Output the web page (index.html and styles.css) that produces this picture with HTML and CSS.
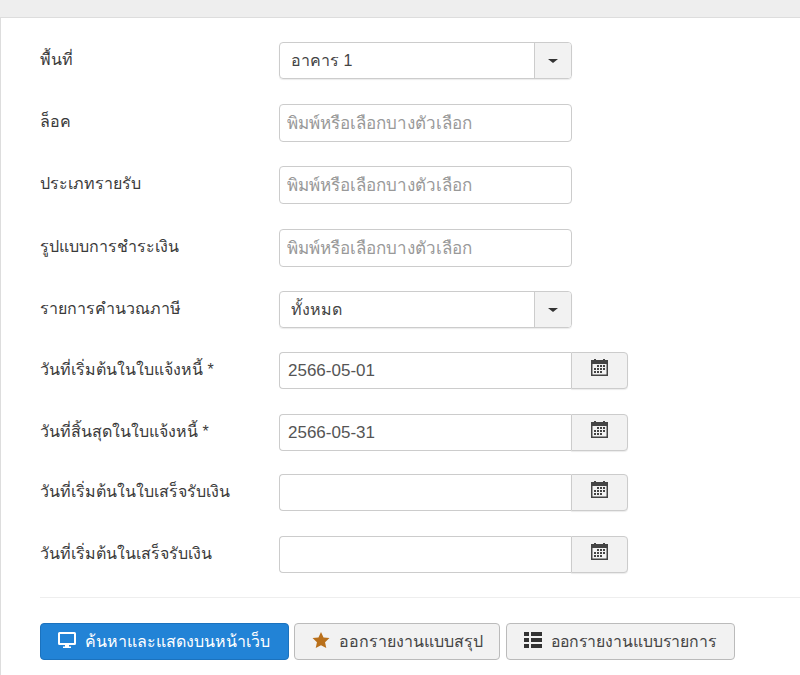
FILE: index.html
```html
<!DOCTYPE html>
<html lang="th">
<head>
    <meta charset="UTF-8">
    <meta name="viewport" content="width=device-width, initial-scale=1.0">
    <title>รายงาน</title>
    <link rel="stylesheet" href="styles.css">
</head>
<body>
    <svg class="sprites">
        <symbol id="icon-cal" viewBox="0 0 17 17">
            <path d="M0 1h3V0h2v1h7V0h2v1h3v16H0zM1.500 5v10.500h14V5z"/>
            <path d="M6 6h2v2H6zM9 6h2v2H9zM12 6h2v2h-2zM3 9h2v2H3zM6 9h2v2H6zM9 9h2v2H9zM12 9h2v2h-2zM3 12h2v2H3zM6 12h2v2H6zM9 12h2v2H9z"/>
        </symbol>
    </svg>

    <div class="top-bar"></div>

    <form class="panel">
        <div class="form-row">
            <label>พื้นที่</label>
            <div class="combo">
                <span class="combo-value">อาคาร 1</span>
                <span class="combo-btn"><i class="caret"></i></span>
            </div>
        </div>

        <div class="form-row">
            <label>ล็อค</label>
            <input class="tag-input" type="text" placeholder="พิมพ์หรือเลือกบางตัวเลือก">
        </div>

        <div class="form-row row-tall">
            <label>ประเภทรายรับ</label>
            <input class="tag-input" type="text" placeholder="พิมพ์หรือเลือกบางตัวเลือก">
        </div>

        <div class="form-row">
            <label>รูปแบบการชำระเงิน</label>
            <input class="tag-input" type="text" placeholder="พิมพ์หรือเลือกบางตัวเลือก">
        </div>

        <div class="form-row row-short">
            <label>รายการคำนวณภาษี</label>
            <div class="combo">
                <span class="combo-value">ทั้งหมด</span>
                <span class="combo-btn"><i class="caret"></i></span>
            </div>
        </div>

        <div class="form-row">
            <label>วันที่เริ่มต้นในใบแจ้งหนี้ *</label>
            <div class="date-group">
                <input type="text" value="2566-05-01">
                <span class="date-btn"><svg class="cal"><use href="#icon-cal"/></svg></span>
            </div>
        </div>

        <div class="form-row row-shorter">
            <label>วันที่สิ้นสุดในใบแจ้งหนี้ *</label>
            <div class="date-group">
                <input type="text" value="2566-05-31">
                <span class="date-btn"><svg class="cal"><use href="#icon-cal"/></svg></span>
            </div>
        </div>

        <div class="form-row">
            <label>วันที่เริ่มต้นในใบเสร็จรับเงิน</label>
            <div class="date-group">
                <input type="text">
                <span class="date-btn"><svg class="cal"><use href="#icon-cal"/></svg></span>
            </div>
        </div>

        <div class="form-row row-short">
            <label>วันที่เริ่มต้นในเสร็จรับเงิน</label>
            <div class="date-group">
                <input type="text">
                <span class="date-btn"><svg class="cal"><use href="#icon-cal"/></svg></span>
            </div>
        </div>

        <hr class="divider">

        <div class="actions">
            <button type="button" class="btn btn-primary">
                <svg class="btn-icon" viewBox="0 0 18 16"><path fill="#fff" d="M1.500 0h15A1.500 1.500 0 0 1 18 1.500v10a1.500 1.500 0 0 1-1.500 1.500H11v1.500h2V16H5v-1.500h2V13H1.500A1.500 1.500 0 0 1 0 11.500v-10A1.500 1.500 0 0 1 1.500 0zM2 2v9h14V2z"/></svg>
                ค้นหาและแสดงบนหน้าเว็บ
            </button>
            <button type="button" class="btn btn-summary">
                <svg class="btn-icon" viewBox="0 0 18 17"><path fill="#b9701b" d="M9 0l2.700 5.800 6.300.7-4.700 4.300 1.300 6.200L9 14l-5.600 3 1.300-6.200L0 6.500l6.300-.7z"/></svg>
                ออกรายงานแบบสรุป
            </button>
            <button type="button" class="btn btn-list">
                <svg class="btn-icon" viewBox="0 0 18 16"><path fill="#333" d="M0 0h5v4H0zM7 0h11v4H7zM0 6h5v4H0zM7 6h11v4H7zM0 12h5v4H0zM7 12h11v4H7z"/></svg>
                ออกรายงานแบบรายการ
            </button>
        </div>
    </form>
</body>
</html>
```

FILE: styles.css
```css
* {
    box-sizing: border-box;
}

html, body {
    height: 100%;
}

body {
    margin: 0;
    overflow: hidden;
    background-color: #fff;
    color: #333;
    font-family: "Liberation Sans", "Noto Sans", sans-serif;
    font-size: 16px;
}

.sprites {
    display: none;
}

.top-bar {
    height: 18px;
    background-color: #eee;
    border-bottom: 1px solid #ddd;
}

.panel {
    height: 657px;
    padding: 24px 0 0 39px;
    border-left: 1px solid #ddd;
}

.form-row {
    display: flex;
    align-items: flex-start;
    height: 62px;
}

.row-tall { height: 63px; }
.row-short { height: 61px; }
.row-shorter { height: 60px; }

.form-row label {
    width: 239px;
    padding-top: 7px;
    color: #3a3a3a;
    font-size: 16px;
    line-height: 22px;
}

.combo {
    display: flex;
    width: 293px;
    height: 37px;
    border: 1px solid #ccc;
    border-radius: 4px;
    box-shadow: 0 1px 1px rgba(0,0,0,0.08);
}

.combo-value {
    flex: 1;
    padding: 0 11px;
    font-size: 16px;
    line-height: 35px;
    color: #444;
}

.combo-btn {
    display: flex;
    justify-content: center;
    align-items: center;
    width: 37px;
    border-left: 1px solid #ccc;
    background-color: #f2f2f2;
    border-radius: 0 3px 3px 0;
}

.caret {
    width: 0;
    height: 0;
    border-top: 4px solid #333;
    border-left: 5px solid transparent;
    border-right: 5px solid transparent;
}

input {
    font: inherit;
    color: #555;
    outline: none;
}

input::placeholder {
    color: #999;
    opacity: 1;
}

.tag-input {
    width: 293px;
    height: 38px;
    padding: 2px 7px 0;
    border: 1px solid #ccc;
    border-radius: 4px;
    font-size: 17px;
}

.date-group {
    display: flex;
    width: 349px;
    height: 37px;
}

.date-group input {
    flex: 1;
    min-width: 0;
    padding: 0 8px;
    border: 1px solid #ccc;
    border-right: 0;
    border-radius: 4px 0 0 4px;
    font-size: 17px;
}

.date-btn {
    display: flex;
    justify-content: center;
    padding-top: 6px;
    width: 57px;
    border: 1px solid #ccc;
    border-radius: 0 4px 4px 0;
    background-color: #f2f2f2;
    box-shadow: 0 1px 1px rgba(0,0,0,0.08);
}

.cal {
    width: 17px;
    height: 17px;
    fill: #444;
}

.divider {
    margin: 0;
    border: 0;
    border-top: 1px solid #eee;
}

.actions {
    display: flex;
    gap: 5px;
    margin-top: 25px;
}

.btn {
    display: flex;
    align-items: center;
    gap: 9px;
    height: 37px;
    padding: 0 17px;
    border: 1px solid #bbb;
    border-radius: 4px;
    background-color: #f2f2f2;
    color: #444;
    font-family: inherit;
    font-size: 16px;
}

.btn-primary {
    padding-right: 18px;
    border-color: #1b72be;
    background-color: #2283d6;
    color: #fff;
}

.btn-summary {
    padding-right: 16px;
}

.btn-list {
    margin-left: 1px;
    padding-right: 18px;
    font-size: 15.8px;
}

.btn-icon {
    width: 18px;
    height: 16px;
    margin-top: -3px;
}
```
